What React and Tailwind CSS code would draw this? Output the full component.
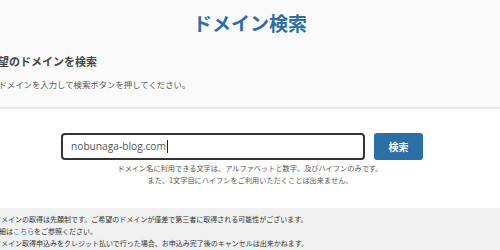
export default function App() {
    const jp = { fontFamily: '"Noto Sans CJK JP", "Noto Sans", sans-serif' };

    return (
        <div className="w-[500px] h-[250px] overflow-hidden bg-white text-[#444]" style={jp}>
            {/* ヘッダー部分 */}
            <div className="h-[109px] bg-[#fafafa] border-b-2 border-[#e9e9e9]">
                <h1 className="pt-[11px] text-center text-[19px] leading-[24px] font-bold text-[#2c6ea6]">
                    ドメイン検索
                </h1>
                <h2 className="mt-[19px] -ml-[24px] text-[11px] leading-[14px] font-bold text-[#444] whitespace-nowrap">
                    ご希望のドメインを検索
                </h2>
                <p className="mt-[10px] -ml-[35px] text-[8.4px] leading-[12px] text-[#555] whitespace-nowrap">
                    ご希望のドメインを入力して検索ボタンを押してください。
                </p>
            </div>

            {/* 検索フォーム */}
            <div className="pt-[24px] pb-[22px]">
                <div className="flex justify-center gap-[9px] pr-[16px]">
                    <div className="w-[304px] h-[27px] border-2 border-[#333] rounded-[4px] bg-white flex items-center pl-[8px]">
                        <span className="text-[10.2px] text-[#555]" style={{ fontFamily: '"Open Sans", sans-serif' }}>
                            nobunaga-blog.com
                        </span>
                        <span className="w-px h-[13px] bg-[#222] ml-px"></span>
                    </div>
                    <button className="w-[49px] h-[27px] bg-[#2c6ea6] rounded-[3px] text-white text-[10px] font-bold">
                        検索
                    </button>
                </div>
                <div className="mt-[2px] text-center text-[7.2px] leading-[12px] text-[#555]">
                    <p>ドメイン名に利用できる文字は、アルファベットと数字、及びハイフンのみです。</p>
                    <p>また、1文字目にハイフンをご利用いただくことは出来ません。</p>
                </div>
            </div>

            {/* 注意事項 */}
            <div className="bg-[#f0f0f0] pt-[5px] h-[42px] text-[7px] leading-[12px] text-[#333] whitespace-nowrap">
                <p className="-ml-[6px]">ドメインの取得は先願制です。ご希望のドメインが僅差で第三者に取得される可能性がございます。</p>
                <p className="-ml-[8px]">詳細は<span className="text-[#2a7bc4]">こちら</span>をご参照ください。</p>
                <p className="-ml-[6px]">ドメイン取得申込みをクレジット払いで行った場合、お申込み完了後のキャンセルは出来かねます。</p>
            </div>
        </div>
    );
}
